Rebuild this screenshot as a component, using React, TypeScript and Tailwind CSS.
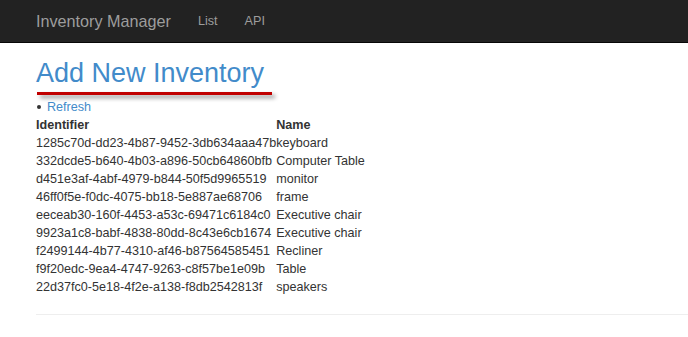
import React from "react";

const rows: [string, string][] = [
  ["1285c70d-dd23-4b87-9452-3db634aaa47b", "keyboard"],
  ["332dcde5-b640-4b03-a896-50cb64860bfb", "Computer Table"],
  ["d451e3af-4abf-4979-b844-50f5d9965519", "monitor"],
  ["46ff0f5e-f0dc-4075-bb18-5e887ae68706", "frame"],
  ["eeceab30-160f-4453-a53c-69471c6184c0", "Executive chair"],
  ["9923a1c8-babf-4838-80dd-8c43e6cb1674", "Executive chair"],
  ["f2499144-4b77-4310-af46-b87564585451", "Recliner"],
  ["f9f20edc-9ea4-4747-9263-c8f57be1e09b", "Table"],
  ["22d37fc0-5e18-4f2e-a138-f8db2542813f", "speakers"],
];

export default function App() {
  return (
    <div className="w-[688px] h-[337px] overflow-hidden bg-white font-['Liberation_Sans',Arial,sans-serif] text-[12.6px] text-[#333]">
      <nav className="h-[43px] bg-[#222] border-b border-[#080808] flex items-center pl-[36px]">
        <span className="text-[16.2px] text-[#9d9d9d] leading-none">Inventory Manager</span>
        <span className="ml-[27px] text-[12.6px] text-[#9d9d9d] leading-none">List</span>
        <span className="ml-[27px] text-[12.6px] text-[#9d9d9d] leading-none">API</span>
      </nav>
      <div className="pl-[36px]">
        <div className="relative mt-[15px]">
          <h2 className="text-[27px] leading-[30px] text-[#428bca] m-0 font-normal">Add New Inventory</h2>
          <div className="absolute left-[1px] top-[34px] w-[235px] h-[3px] bg-[#c00000] shadow-[3px_3px_4px_rgba(0,0,0,0.45)]" />
        </div>
        <div className="mt-[10px] flex items-center leading-[18px]">
          <span className="ml-[1px] mr-[6px] w-[4px] h-[4px] rounded-full bg-[#333]" />
          <span className="text-[#428bca]">Refresh</span>
        </div>
        <table className="border-collapse leading-[18px]">
          <thead>
            <tr>
              <th className="text-left font-bold p-0 w-[240px]">Identifier</th>
              <th className="text-left font-bold p-0">Name</th>
            </tr>
          </thead>
          <tbody>
            {rows.map(([id, name]) => (
              <tr key={id}>
                <td className="p-0 whitespace-nowrap">{id}</td>
                <td className="p-0 whitespace-nowrap">{name}</td>
              </tr>
            ))}
          </tbody>
        </table>
        <div className="mt-[18px] h-px bg-[#eee] w-[700px]" />
      </div>
    </div>
  );
}
